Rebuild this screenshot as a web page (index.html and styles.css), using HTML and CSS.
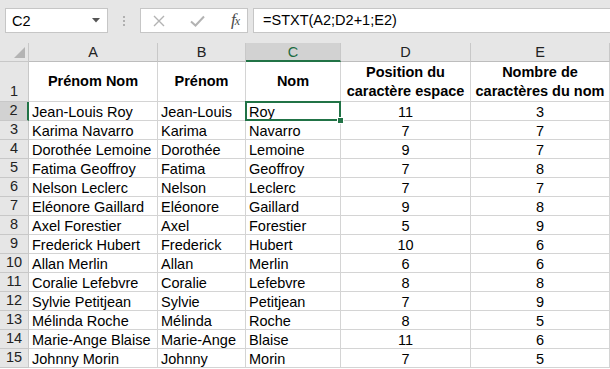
FILE: index.html
```html
<!DOCTYPE html>
<html lang="fr">
<head>
<meta charset="utf-8">
<title>STXT</title>
<link rel="stylesheet" href="styles.css">
</head>
<body>
<div class="app">
  <div class="fbar">
    <div class="namebox"><span>C2</span>
      <svg class="arrow" width="8" height="5" viewBox="0 0 8 5"><path d="M0 0h8L4 4.5z" fill="#555"/></svg>
    </div>
    <div class="dots"><i></i><i></i><i></i></div>
    <div class="btns">
      <svg class="ico" width="12" height="12" viewBox="0 0 12 12"><path d="M1 1L11 11M11 1L1 11" stroke="#b3b3b3" stroke-width="1.4" fill="none"/></svg>
      <svg class="ico" width="15" height="12" viewBox="0 0 15 12"><path d="M1 6.5L5.5 10.5L14 1.5" stroke="#b3b3b3" stroke-width="2" fill="none"/></svg>
      <span class="fx">f<small>x</small></span>
    </div>
    <div class="formula">=STXT(A2;D2+1;E2)</div>
  </div>
  <div class="sheet">
    <div class="corner"><span class="tri"></span></div>
    <div class="ch">A</div><div class="ch">B</div><div class="ch sel">C</div><div class="ch">D</div><div class="ch">E</div>

    <div class="rh r1">1</div>
    <div class="c hd">Prénom Nom</div><div class="c hd">Prénom</div><div class="c hd">Nom</div><div class="c hd">Position du caractère espace</div><div class="c hd">Nombre de caractères du nom</div>

    <div class="rh sel">2</div><div class="c">Jean-Louis Roy</div><div class="c">Jean-Louis</div><div class="c active">Roy<span class="handle"></span></div><div class="c n">11</div><div class="c n">3</div>
    <div class="rh">3</div><div class="c">Karima Navarro</div><div class="c">Karima</div><div class="c">Navarro</div><div class="c n">7</div><div class="c n">7</div>
    <div class="rh">4</div><div class="c">Dorothée Lemoine</div><div class="c">Dorothée</div><div class="c">Lemoine</div><div class="c n">9</div><div class="c n">7</div>
    <div class="rh">5</div><div class="c">Fatima Geoffroy</div><div class="c">Fatima</div><div class="c">Geoffroy</div><div class="c n">7</div><div class="c n">8</div>
    <div class="rh">6</div><div class="c">Nelson Leclerc</div><div class="c">Nelson</div><div class="c">Leclerc</div><div class="c n">7</div><div class="c n">7</div>
    <div class="rh">7</div><div class="c">Eléonore Gaillard</div><div class="c">Eléonore</div><div class="c">Gaillard</div><div class="c n">9</div><div class="c n">8</div>
    <div class="rh">8</div><div class="c">Axel Forestier</div><div class="c">Axel</div><div class="c">Forestier</div><div class="c n">5</div><div class="c n">9</div>
    <div class="rh">9</div><div class="c">Frederick Hubert</div><div class="c">Frederick</div><div class="c">Hubert</div><div class="c n">10</div><div class="c n">6</div>
    <div class="rh">10</div><div class="c">Allan Merlin</div><div class="c">Allan</div><div class="c">Merlin</div><div class="c n">6</div><div class="c n">6</div>
    <div class="rh">11</div><div class="c">Coralie Lefebvre</div><div class="c">Coralie</div><div class="c">Lefebvre</div><div class="c n">8</div><div class="c n">8</div>
    <div class="rh">12</div><div class="c">Sylvie Petitjean</div><div class="c">Sylvie</div><div class="c">Petitjean</div><div class="c n">7</div><div class="c n">9</div>
    <div class="rh">13</div><div class="c">Mélinda Roche</div><div class="c">Mélinda</div><div class="c">Roche</div><div class="c n">8</div><div class="c n">5</div>
    <div class="rh">14</div><div class="c">Marie-Ange Blaise</div><div class="c">Marie-Ange</div><div class="c">Blaise</div><div class="c n">11</div><div class="c n">6</div>
    <div class="rh">15</div><div class="c">Johnny Morin</div><div class="c">Johnny</div><div class="c">Morin</div><div class="c n">7</div><div class="c n">5</div>
  </div>
</div>
</body>
</html>
```
FILE: styles.css
```css
* { box-sizing: border-box; }
html, body { margin: 0; padding: 0; background: #fff; }
body { font-family: "Liberation Sans", Arial, sans-serif; font-size: 14.5px; color: #000; width: 610px; height: 369px; overflow: hidden; }

.fbar {
  height: 43px;
  background: #e6e6e6;
  display: flex;
  align-items: flex-start;
  padding-top: 8px;
}
.namebox {
  margin-left: 5px;
  width: 103px;
  height: 25px;
  background: #fff;
  border: 1px solid #c6c6c6;
  display: flex;
  align-items: center;
  justify-content: space-between;
  padding: 0 7px 0 6px;
  font-size: 14.5px;
}
.dots {
  width: 32px;
  height: 25px;
  display: flex;
  flex-direction: column;
  align-items: center;
  justify-content: center;
  gap: 2px;
}
.dots i { display: block; width: 2px; height: 2px; background: #b0b0b0; }
.btns {
  width: 108px;
  height: 25px;
  background: #fff;
  border: 1px solid #c6c6c6;
  display: flex;
  align-items: center;
  padding: 0 8px 0 12px;
  justify-content: space-between;
}
.fx {
  font-family: "Liberation Serif", "Times New Roman", serif;
  font-style: italic;
  font-size: 17px;
  color: #4a4a4a;
  letter-spacing: -1px;
  line-height: 20px;
}
.fx small { font-size: 12px; }
.formula {
  margin-left: 5px;
  flex: 1;
  height: 25px;
  background: #fff;
  border: 1px solid #c6c6c6;
  border-right: 0;
  padding-left: 9px;
  line-height: 23px;
}

.sheet {
  display: grid;
  grid-template-columns: 29px 129px 88px 95px 130px 1fr;
  grid-template-rows: 19px 40px repeat(14, 19px);
}
.corner {
  background: #e6e6e6;
  border-right: 1px solid #c8c8c8;
  border-bottom: 1px solid #c8c8c8;
  position: relative;
}
.tri {
  position: absolute;
  right: 3px;
  bottom: 3px;
  width: 0; height: 0;
  border-left: 11px solid transparent;
  border-bottom: 11px solid #b4b4b4;
}
.ch {
  background: #e6e6e6;
  border-right: 1px solid #c8c8c8;
  border-bottom: 1px solid #bdbdbd;
  text-align: center;
  line-height: 18px;
  color: #222;
}
.ch.sel {
  background: #d2d2d2;
  border-bottom: 2px solid #217346;
  color: #1e6b41;
}
.rh {
  background: #e6e6e6;
  border-right: 1px solid #c8c8c8;
  border-bottom: 1px solid #c8c8c8;
  display: flex;
  align-items: flex-end;
  justify-content: center;
  line-height: 17px;
  color: #222;
  padding-bottom: 1px;
}
.rh.sel {
  background: #d2d2d2;
  border-right: 2px solid #217346;
}
.c {
  border-right: 1px solid #d4d4d4;
  border-bottom: 1px solid #d4d4d4;
  padding: 2px 0 0 3px;
  line-height: 17px;
  white-space: nowrap;
  overflow: visible;
}
.c.n { text-align: center; padding-left: 0; }
.c.hd {
  font-weight: bold;
  white-space: normal;
  text-align: center;
  display: flex;
  align-items: center;
  justify-content: center;
  line-height: 19px;
  padding: 0;
}
.c.active {
  position: relative;
}
.c.active::before {
  content: "";
  position: absolute;
  left: -1px;
  top: -1px;
  right: -1px;
  bottom: -1px;
  border: 2px solid #217346;
}
.handle {
  position: absolute;
  right: -4px;
  bottom: -4px;
  width: 7px;
  height: 7px;
  background: #217346;
  border: 1px solid #fff;
  z-index: 2;
}
```
